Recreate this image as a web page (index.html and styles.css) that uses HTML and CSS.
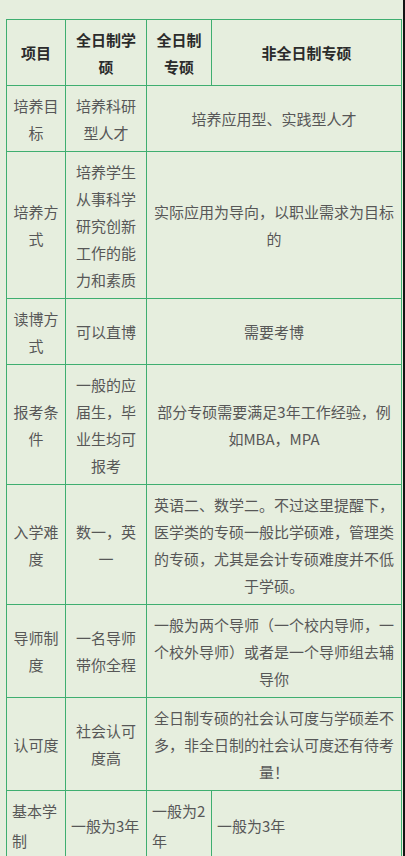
FILE: index.html
```html
<!DOCTYPE html>
<html lang="zh-CN">
<head>
<meta charset="utf-8">
<title>全日制与非全日制对比</title>
<link rel="stylesheet" href="styles.css">
</head>
<body>
<div class="page">
  <table class="cmp">
    <thead>
      <tr>
        <th class="c1">项目</th>
        <th class="c2">全日制学硕</th>
        <th class="c3">全日制专硕</th>
        <th class="c4">非全日制专硕</th>
      </tr>
    </thead>
    <tbody>
      <tr><td>培养目标</td><td>培养科研型人才</td><td colspan="2">培养应用型、实践型人才</td></tr>
      <tr><td>培养方式</td><td>培养学生从事科学研究创新工作的能力和素质</td><td colspan="2">实际应用为导向，以职业需求为目标的</td></tr>
      <tr><td>读博方式</td><td>可以直博</td><td colspan="2">需要考博</td></tr>
      <tr><td>报考条件</td><td>一般的应届生，毕业生均可报考</td><td colspan="2">部分专硕需要满足3年工作经验，例如MBA，MPA</td></tr>
      <tr><td>入学难度</td><td>数一，英一</td><td colspan="2">英语二、数学二。不过这里提醒下，医学类的专硕一般比学硕难，管理类的专硕，尤其是会计专硕难度并不低于学硕。</td></tr>
      <tr><td>导师制度</td><td>一名导师带你全程</td><td colspan="2">一般为两个导师（一个校内导师，一个校外导师）或者是一个导师组去辅导你</td></tr>
      <tr><td>认可度</td><td>社会认可度高</td><td colspan="2">全日制专硕的社会认可度与学硕差不多，非全日制的社会认可度还有待考量！</td></tr>
      <tr class="left"><td>基本学制</td><td>一般为3年</td><td>一般为2年</td><td>一般为3年</td></tr>
    </tbody>
  </table>
</div>
</body>
</html>
```

FILE: styles.css
```css
html {
  background: #141414;
}
body {
  margin: 0;
}
.page {
  width: 403px;
  height: 856px;
  overflow: hidden;
  box-sizing: border-box;
  padding: 19px 0 0 6px;
  background: #e6eede;
  font-family: "Noto Sans CJK SC", "Noto Sans", sans-serif;
}
.cmp {
  border-collapse: separate;
  border-spacing: 0;
  table-layout: fixed;
  width: 396px;
  border-left: 1px solid #3fae70;
  border-top: 1px solid #3fae70;
}
.cmp th,
.cmp td {
  box-sizing: border-box;
  border-right: 1px solid #3fae70;
  border-bottom: 1px solid #3fae70;
  padding: 5.5px 5px;
  font-size: 15px;
  line-height: 27px;
  text-align: center;
  vertical-align: middle;
  color: #575757;
  font-weight: 400;
  word-break: break-all;
}
.cmp th {
  color: #2b2b2b;
  font-weight: 700;
}
.c1 { width: 59px; }
.c2 { width: 81px; }
.c3 { width: 65px; }
.c4 { width: 190px; }
.cmp tr.left td {
  text-align: left;
  line-height: 30px;
  padding-top: 5px;
  padding-bottom: 8px;
}
```
